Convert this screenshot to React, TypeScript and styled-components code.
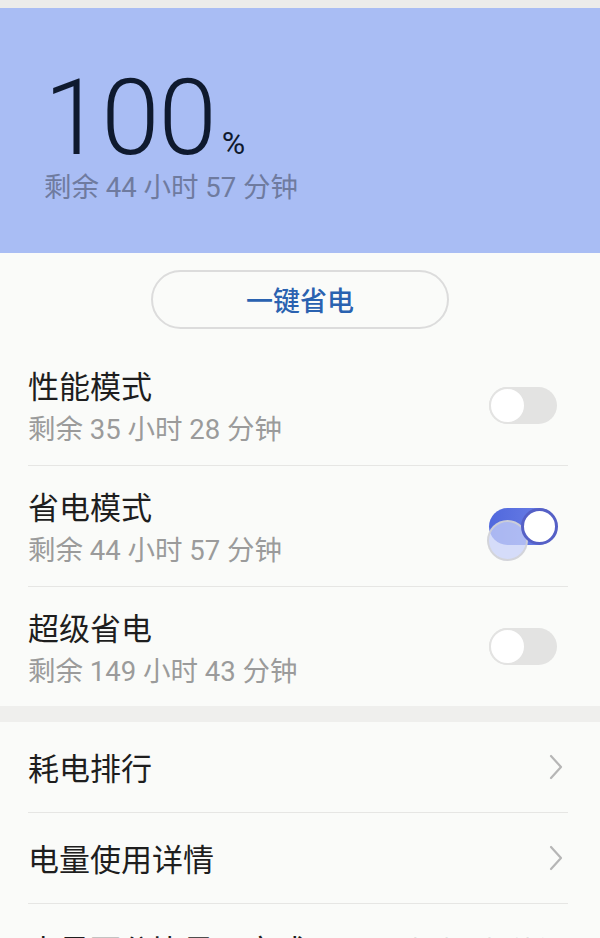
import React from 'react';
import styled, { createGlobalStyle } from 'styled-components';

const GlobalStyle = createGlobalStyle`
  html, body {
    margin: 0;
    padding: 0;
    background: #fafbf9;
  }
  body {
    font-family: Roboto, "Noto Sans CJK SC", sans-serif;
    -webkit-font-smoothing: antialiased;
  }
`;

const Page = styled.div`
  width: 600px;
  height: 938px;
  overflow: hidden;
  background: #fafbf9;
  border-top: 8px solid #ececea;
  box-sizing: border-box;
`;

const Header = styled.div`
  background: #a9bdf4;
  height: 245px;
  padding: 58px 0 0 44px;
  box-sizing: border-box;
`;

const Level = styled.div`
  display: flex;
  align-items: baseline;
  color: #0f1a2e;
  font-family: Roboto, sans-serif;
  font-weight: 300;
  line-height: 1;
`;

const Big = styled.span`
  font-size: 105px;
  letter-spacing: -1px;
`;

const Percent = styled.span`
  font-size: 32px;
  margin-left: 6px;
  font-weight: 400;
`;

const HeaderSub = styled.div`
  margin-top: 0;
  font-size: 27.5px;
  color: #6f7b9f;
  line-height: 34px;
`;

const ButtonWrap = styled.div`
  display: flex;
  justify-content: center;
  padding-top: 17px;
  height: 92px;
  box-sizing: border-box;
`;

const SaveButton = styled.button`
  width: 298px;
  height: 59px;
  border-radius: 30px;
  border: 2px solid #dcdcdc;
  background: #fafbf9;
  color: #2a62b0;
  font-family: "Noto Sans CJK SC", sans-serif;
  font-size: 27px;
  font-weight: 500;
  padding: 0;
`;

const List = styled.div`
  padding: 0 32px 0 28px;
`;

const ModeRow = styled.div<{ $last?: boolean }>`
  display: flex;
  align-items: center;
  justify-content: space-between;
  height: ${(p) => (p.$last ? 119 : 120)}px;
  border-bottom: ${(p) => (p.$last ? 'none' : '1px solid #e6e6e4')};
  padding-right: 11px;
`;

const TextBlock = styled.div`
  display: flex;
  flex-direction: column;
  gap: 5px;
  padding-top: 5px;
`;

const Title = styled.div`
  font-family: "Noto Sans CJK SC", sans-serif;
  font-size: 31px;
  line-height: 40px;
  color: #1e1e1e;
`;

const Sub = styled.div`
  font-size: 27.5px;
  line-height: 40px;
  color: #9b9b9b;
`;

const Band = styled.div`
  height: 16px;
  background: #efefed;
`;

const NavRow = styled.div<{ $last?: boolean }>`
  display: flex;
  align-items: center;
  justify-content: space-between;
  height: 90px;
  border-bottom: ${(p) => (p.$last ? 'none' : '1px solid #e6e6e4')};
  padding-right: 4px;
`;

const Value = styled.span`
  font-family: "Noto Sans CJK SC", sans-serif;
  font-size: 27px;
  color: #9b9b9b;
`;

const Track = styled.div<{ $on?: boolean }>`
  position: relative;
  width: 68px;
  height: 37px;
  border-radius: 19px;
  background: ${(p) => (p.$on ? 'linear-gradient(90deg, #5068dd, #6f82e6)' : '#e3e3e2')};
  flex-shrink: 0;
`;

const Knob = styled.div<{ $on?: boolean }>`
  position: absolute;
  top: 0;
  left: ${(p) => (p.$on ? '32px' : '0')};
  width: 37px;
  height: 37px;
  border-radius: 50%;
  box-sizing: border-box;
  background: #fff;
  border: ${(p) => (p.$on ? '3px solid #5560c6' : '2px solid #e3e3e2')};
`;

const Ghost = styled.div`
  position: absolute;
  top: 12px;
  left: -2px;
  width: 41px;
  height: 41px;
  border-radius: 50%;
  box-sizing: border-box;
  background: rgba(200, 210, 248, 0.75);
  border: 2px solid rgba(210, 210, 210, 0.8);
`;

const Toggle = ({ on }: { on?: boolean }) => (
  <Track $on={on}>
    {on && <Ghost />}
    <Knob $on={on} />
  </Track>
);

const Chevron = () => (
  <svg width="16" height="26" viewBox="0 0 16 26">
    <polyline points="3,2 13,13 3,24" fill="none" stroke="#b6b6b6" strokeWidth="2.2" strokeLinecap="round" strokeLinejoin="round" />
  </svg>
);

const modes = [
  { title: '性能模式', sub: '剩余 35 小时 28 分钟', on: false },
  { title: '省电模式', sub: '剩余 44 小时 57 分钟', on: true },
  { title: '超级省电', sub: '剩余 149 小时 43 分钟', on: false },
];

const App = () => (
  <Page>
    <GlobalStyle />
    <Header>
      <Level>
        <Big>100</Big>
        <Percent>%</Percent>
      </Level>
      <HeaderSub>剩余 44 小时 57 分钟</HeaderSub>
    </Header>
    <ButtonWrap>
      <SaveButton>一键省电</SaveButton>
    </ButtonWrap>
    <List>
      {modes.map((m, i) => (
        <ModeRow key={m.title} $last={i === modes.length - 1}>
          <TextBlock>
            <Title>{m.title}</Title>
            <Sub>{m.sub}</Sub>
          </TextBlock>
          <Toggle on={m.on} />
        </ModeRow>
      ))}
    </List>
    <Band />
    <List>
      <NavRow>
        <Title>耗电排行</Title>
        <Chevron />
      </NavRow>
      <NavRow>
        <Title>电量使用详情</Title>
        <Chevron />
      </NavRow>
      <NavRow $last>
        <Title>电量百分比显示方式</Title>
        <Value>电池图标外侧</Value>
      </NavRow>
    </List>
  </Page>
);

export default App;
